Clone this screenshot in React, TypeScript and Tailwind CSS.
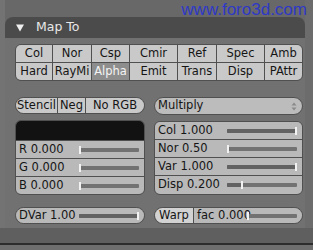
import React from "react";

const F = { fontFamily: '"DejaVu Sans", "Liberation Sans", sans-serif' };

function Slider({ label, value, cls = "" }: { label: string; value: number; cls?: string }) {
  return (
    <div className={"flex items-center bg-[#b9b9b9] text-[11.5px] leading-none text-[#151515] " + cls}>
      <div className="w-[49%] shrink-0 pl-[3px] whitespace-nowrap">{label}</div>
      <div className="flex-1 mr-[5px] relative h-[4px] bg-[#727272] rounded-[1px]">
        <div className="h-full bg-[#626262] rounded-[1px]" style={{ width: `${value * 100}%` }} />
        <div
          className="absolute top-[-2px] w-[2px] h-[8px] bg-[#f2f2f2]"
          style={{ left: `calc(${value * 100}% - ${value * 2}px)` }}
        />
      </div>
    </div>
  );
}

function Cell({ t, w, last, active }: { t: string; w: string; last?: boolean; active?: boolean }) {
  return (
    <div
      className={
        "flex items-center justify-center whitespace-nowrap " +
        w +
        (last ? "" : " border-r border-[#505050]") +
        (active ? " bg-[#8d8d8d] text-[#f4f4f4]" : " bg-[#c9c9c9] text-[#151515]")
      }
    >
      {t}
    </div>
  );
}

export default function App() {
  const row1 = ["Col", "Nor", "Csp", "Cmir", "Ref", "Spec", "Amb"];
  const row2 = ["Hard", "RayMi", "Alpha", "Emit", "Trans", "Disp", "PAttr"];
  const ws = ["w-[37px]", "w-[39px]", "w-[38px]", "w-[48px]", "w-[39px]", "w-[48px]", "w-[37px]"];
  return (
    <div className="relative w-[313px] h-[250px] overflow-hidden bg-[#686868] flex flex-col" style={F}>
      <div
        className="absolute right-[6px] top-[1px] text-[17px] leading-[17px] text-[#2f39c6] whitespace-nowrap"
        style={{ fontFamily: '"Liberation Sans", Arial, sans-serif' }}
      >
        www.foro3d.com
      </div>
      <div className="flex h-[228px]">
        <div className="w-[5px] bg-[#737373]" />
        <div className="pt-[17px]">
          <div className="w-[300px] h-[211px] flex flex-col">
            <div className="h-[21px] bg-[#4b4b4b] rounded-t-[8px] flex items-center pl-[11px]">
              <svg width="8" height="8" viewBox="0 0 8 8">
                <polygon points="0,0.5 8,0.5 4,7.5" fill="#f0f0f0" />
              </svg>
              <span className="ml-[12px] text-[12.5px] leading-none text-[#e8e8e8]">Map To</span>
            </div>
            <div className="flex-1 bg-[#717171] pl-[10px] pt-[6px]">
              <div className="w-[288px] border border-[#505050] rounded-[6px] overflow-hidden text-[11.5px] leading-none">
                <div className="flex h-[18px] border-b border-[#505050]">
                  {row1.map((t, i) => (
                    <Cell key={t} t={t} w={ws[i]} last={i === 6} />
                  ))}
                </div>
                <div className="flex h-[17px]">
                  {row2.map((t, i) => (
                    <Cell key={t} t={t} w={ws[i]} last={i === 6} active={t === "Alpha"} />
                  ))}
                </div>
              </div>

              <div className="flex gap-[9px] mt-[16px]">
                <div className="w-[130px] flex flex-col">
                  <div className="flex h-[17px] border border-[#505050] rounded-full overflow-hidden text-[11.5px] leading-none">
                    <Cell t="Stencil" w="w-[42px]" />
                    <Cell t="Neg" w="w-[28px]" />
                    <Cell t="No RGB" w="flex-1" last />
                  </div>
                  <div className="mt-[6px] border border-[#505050] rounded-[6px] overflow-hidden flex flex-col">
                    <div className="h-[20px] bg-[#121212] border-b border-[#505050]" />
                    <Slider label="R 0.000" value={0} cls="h-[18px] border-b border-[#505050]" />
                    <Slider label="G 0.000" value={0} cls="h-[18px] border-b border-[#505050]" />
                    <Slider label="B 0.000" value={0} cls="h-[17px]" />
                  </div>
                  <div className="mt-[12px] border border-[#505050] rounded-full overflow-hidden">
                    <Slider label="DVar 1.00" value={1} cls="h-[15px]" />
                  </div>
                </div>

                <div className="w-[149px] flex flex-col">
                  <div className="h-[18px] border border-[#505050] rounded-full bg-[#bcbcbc] flex items-center pl-[3px] pr-[5px] text-[11.5px] leading-none text-[#151515]">
                    <span className="flex-1">Multiply</span>
                    <svg width="6" height="9" viewBox="0 0 6 9">
                      <polygon points="0.5,3.5 5.5,3.5 3,0.5" fill="#8a8a8a" />
                      <polygon points="0.5,5.5 5.5,5.5 3,8.5" fill="#8a8a8a" />
                    </svg>
                  </div>
                  <div className="mt-[6px] border border-[#505050] rounded-[6px] overflow-hidden flex flex-col">
                    <Slider label="Col 1.000" value={1} cls="h-[18px] border-b border-[#505050]" />
                    <Slider label="Nor 0.50" value={0} cls="h-[18px] border-b border-[#505050]" />
                    <Slider label="Var 1.000" value={1} cls="h-[18px] border-b border-[#505050]" />
                    <Slider label="Disp 0.200" value={0.2} cls="h-[18px]" />
                  </div>
                  <div className="mt-[12px] flex h-[17px] border border-[#505050] rounded-full overflow-hidden">
                    <div className="w-[39px] border-r border-[#505050] bg-[#d2d2d2] flex items-center pl-[4px] text-[11.5px] leading-none text-[#151515]">
                      Warp
                    </div>
                    <Slider label="fac 0.000" value={0} cls="flex-1 bg-[#b3b3b3]" />
                  </div>
                </div>
              </div>
            </div>
          </div>
        </div>
        <div className="flex-1 bg-[#6c6c6c]" />
      </div>
      <div className="h-[15px] bg-[#5f5f5f]" />
      <div className="h-[2px] bg-[#2c2c2c]" />
      <div className="flex-1 bg-[#6e6e6e]" />
    </div>
  );
}
